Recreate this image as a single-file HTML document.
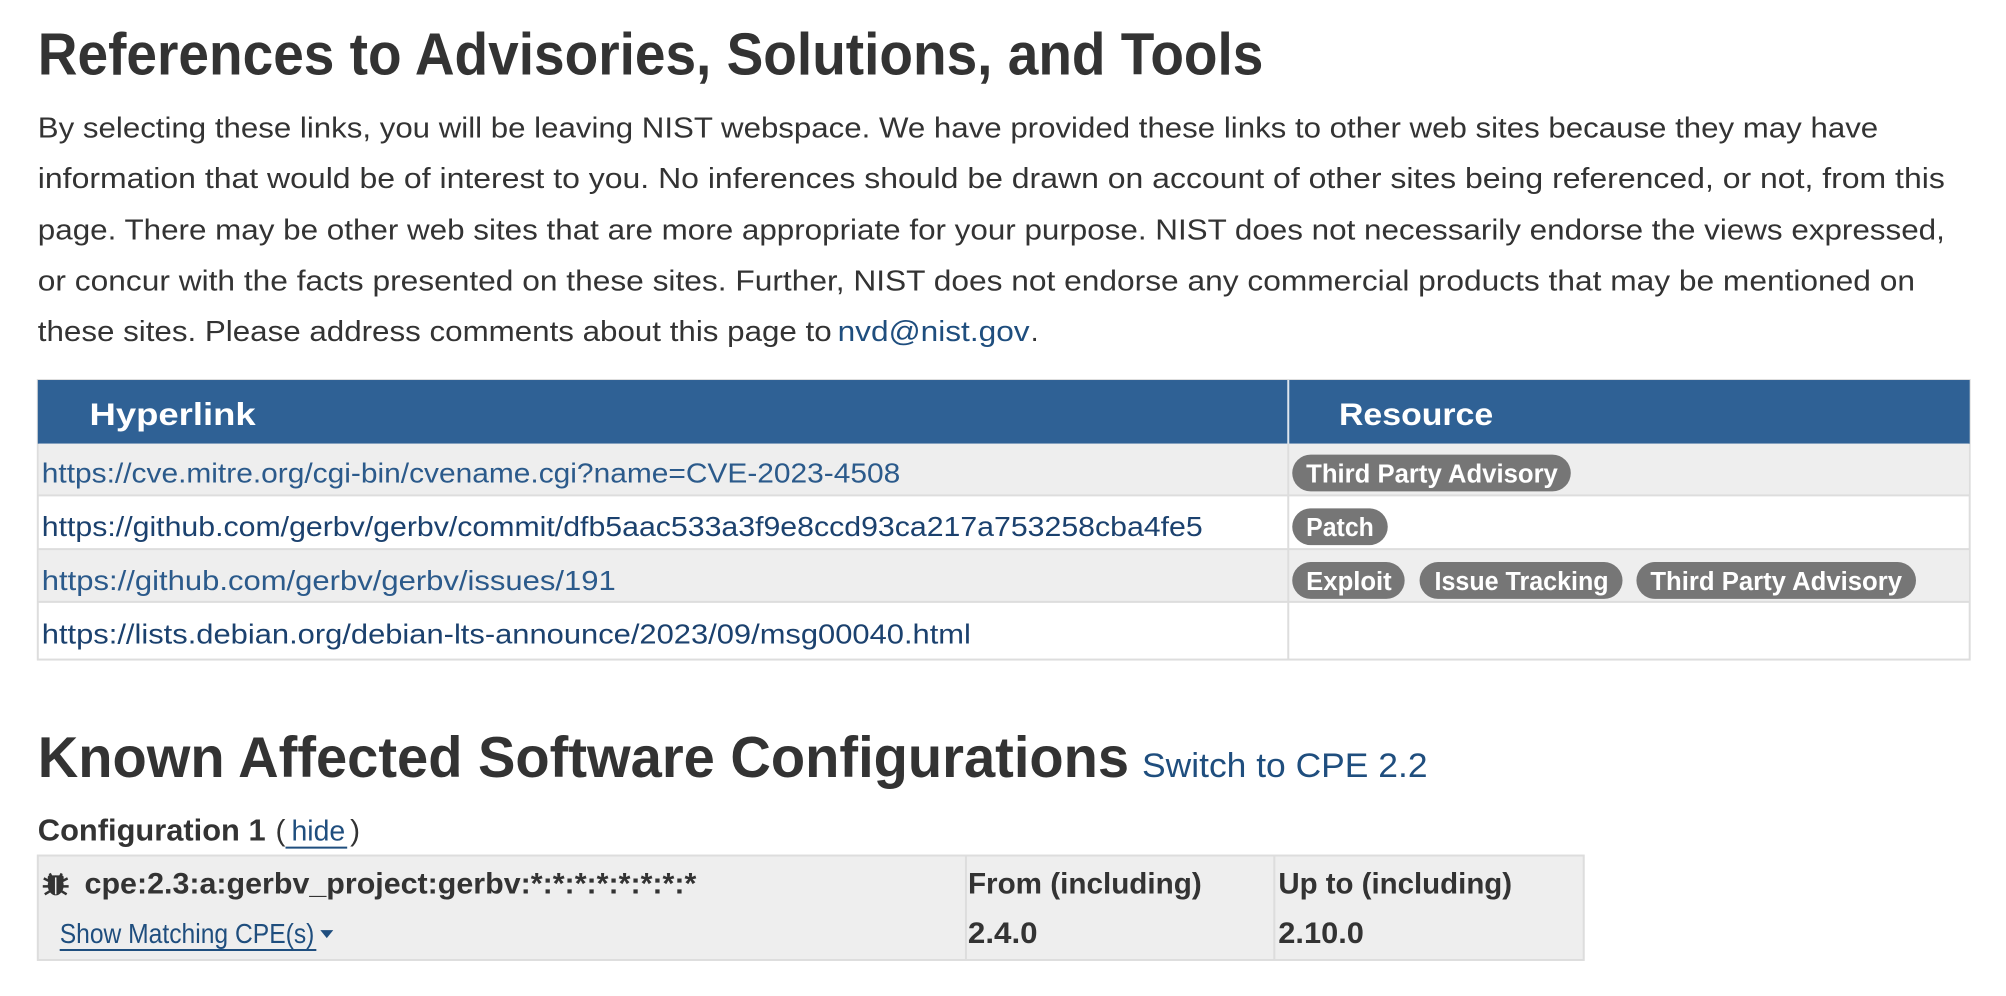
<!DOCTYPE html>
<html><head><meta charset="utf-8"><style>
html,body{margin:0;padding:0;background:#fff;}
svg{display:block;}
text{font-family:"Liberation Sans",sans-serif;}
</style></head><body>
<svg width="2006" height="996" viewBox="0 0 2006 996" xmlns="http://www.w3.org/2000/svg">
<rect width="2006" height="996" fill="#fff"/>
<g transform="scale(0.9948)">
<text x="38" y="75" font-size="60" font-weight="bold" fill="#333" textLength="1232" lengthAdjust="spacingAndGlyphs">References to Advisories, Solutions, and Tools</text>
<g font-size="29" fill="#333">
<text x="38" y="138" textLength="1850" lengthAdjust="spacingAndGlyphs">By selecting these links, you will be leaving NIST webspace. We have provided these links to other web sites because they may have</text>
<text x="38" y="189" textLength="1917" lengthAdjust="spacingAndGlyphs">information that would be of interest to you. No inferences should be drawn on account of other sites being referenced, or not, from this</text>
<text x="38" y="241" textLength="1917" lengthAdjust="spacingAndGlyphs">page. There may be other web sites that are more appropriate for your purpose. NIST does not necessarily endorse the views expressed,</text>
<text x="38" y="292" textLength="1887" lengthAdjust="spacingAndGlyphs">or concur with the facts presented on these sites. Further, NIST does not endorse any commercial products that may be mentioned on</text>
<text x="38" y="343" textLength="798" lengthAdjust="spacingAndGlyphs">these sites. Please address comments about this page to</text>
<text x="842" y="343" textLength="193" lengthAdjust="spacingAndGlyphs" fill="#1f4e7e">nvd@nist.gov</text>
<text x="1036" y="343">.</text>
</g>
<rect x="38" y="382" width="1942" height="281" fill="#fff" stroke="#ddd" stroke-width="2"/>
<rect x="38" y="382" width="1942" height="64" fill="#2f6195"/>
<rect x="39" y="446" width="1940" height="52" fill="#eee"/>
<rect x="39" y="552" width="1940" height="53" fill="#eee"/>
<g stroke="#ddd" stroke-width="2">
<line x1="38" y1="498" x2="1980" y2="498"/><line x1="38" y1="552" x2="1980" y2="552"/><line x1="38" y1="605" x2="1980" y2="605"/>
<line x1="1295" y1="446" x2="1295" y2="663"/>
</g>
<line x1="1295" y1="382" x2="1295" y2="446" stroke="#dfe6ee" stroke-width="2"/>
<g font-size="32" font-weight="bold" fill="#fff">
<text x="90" y="427" textLength="167" lengthAdjust="spacingAndGlyphs">Hyperlink</text>
<text x="1346" y="427" textLength="155" lengthAdjust="spacingAndGlyphs">Resource</text>
</g>
<g font-size="28">
<text x="42" y="485" fill="#2b5a8b" textLength="863" lengthAdjust="spacingAndGlyphs">https://cve.mitre.org/cgi-bin/cvename.cgi?name=CVE-2023-4508</text>
<text x="42" y="539" fill="#1b416e" textLength="1167" lengthAdjust="spacingAndGlyphs">https://github.com/gerbv/gerbv/commit/dfb5aac533a3f9e8ccd93ca217a753258cba4fe5</text>
<text x="42" y="593" fill="#2b5a8b" textLength="577" lengthAdjust="spacingAndGlyphs">https://github.com/gerbv/gerbv/issues/191</text>
<text x="42" y="647" fill="#1b416e" textLength="934" lengthAdjust="spacingAndGlyphs">https://lists.debian.org/debian-lts-announce/2023/09/msg00040.html</text>
</g>
<g fill="#767676">
<rect x="1299" y="457" width="280" height="37" rx="18.5"/>
<rect x="1299" y="511" width="96" height="37" rx="18.5"/>
<rect x="1299" y="565" width="113" height="37" rx="18.5"/>
<rect x="1427" y="565" width="204" height="37" rx="18.5"/>
<rect x="1645" y="565" width="281" height="37" rx="18.5"/>
</g>
<g font-size="26" font-weight="bold" fill="#fff">
<text x="1313" y="485" textLength="253" lengthAdjust="spacingAndGlyphs">Third Party Advisory</text>
<text x="1313" y="539" textLength="68" lengthAdjust="spacingAndGlyphs">Patch</text>
<text x="1313" y="593" textLength="86" lengthAdjust="spacingAndGlyphs">Exploit</text>
<text x="1442" y="593" textLength="175" lengthAdjust="spacingAndGlyphs">Issue Tracking</text>
<text x="1659" y="593" textLength="253" lengthAdjust="spacingAndGlyphs">Third Party Advisory</text>
</g>
<text x="38" y="781" font-size="58" font-weight="bold" fill="#333" textLength="1097" lengthAdjust="spacingAndGlyphs">Known Affected Software Configurations</text>
<text x="1148" y="781" font-size="34" fill="#1f4e7e" textLength="287" lengthAdjust="spacingAndGlyphs">Switch to CPE 2.2</text>
<text x="38" y="845" font-size="31" font-weight="bold" fill="#333" textLength="229" lengthAdjust="spacingAndGlyphs">Configuration 1</text>
<text x="277" y="845" font-size="30" fill="#333">(</text>
<text x="293" y="845" font-size="29" fill="#1f4e7e" textLength="54" lengthAdjust="spacingAndGlyphs">hide</text>
<line x1="287" y1="852" x2="349" y2="852" stroke="#1f4e7e" stroke-width="2"/>
<text x="352" y="845" font-size="30" fill="#333">)</text>
<rect x="38" y="860" width="1554" height="105" fill="#eee" stroke="#ddd" stroke-width="2"/>
<line x1="971" y1="860" x2="971" y2="965" stroke="#ddd" stroke-width="2"/>
<line x1="1281" y1="860" x2="1281" y2="965" stroke="#ddd" stroke-width="2"/>
<g fill="#333" stroke="#333">
<ellipse cx="56" cy="890" rx="8" ry="10" stroke="none"/>
<path d="M50 878 L52 882 M62 878 L60 882 M44 883 L50 886 M68 883 L62 886 M43 891 L49 891 M69 891 L63 891 M45 899 L50 896 M67 899 L62 896" stroke-width="2.5" fill="none"/>
<rect x="48" y="880" width="16" height="5" rx="2" stroke="none"/>
</g>
<line x1="56" y1="882" x2="56" y2="899" stroke="#eee" stroke-width="1.5"/>
<g font-size="30" font-weight="bold" fill="#333">
<text x="85" y="898" textLength="615" lengthAdjust="spacingAndGlyphs">cpe:2.3:a:gerbv_project:gerbv:*:*:*:*:*:*:*:*</text>
<text x="973" y="898" textLength="235" lengthAdjust="spacingAndGlyphs">From (including)</text>
<text x="1285" y="898" textLength="235" lengthAdjust="spacingAndGlyphs">Up to (including)</text>
<text x="973" y="948" textLength="70" lengthAdjust="spacingAndGlyphs">2.4.0</text>
<text x="1285" y="948" textLength="86" lengthAdjust="spacingAndGlyphs">2.10.0</text>
</g>
<text x="60" y="948" font-size="28" fill="#1f4e7e" textLength="256" lengthAdjust="spacingAndGlyphs">Show Matching CPE(s)</text>
<line x1="60" y1="955" x2="318" y2="955" stroke="#1f4e7e" stroke-width="2"/>
<path d="M322 935 L335 935 L328.5 943 Z" fill="#1f4e7e"/>
</g>
</svg>
</body></html>
